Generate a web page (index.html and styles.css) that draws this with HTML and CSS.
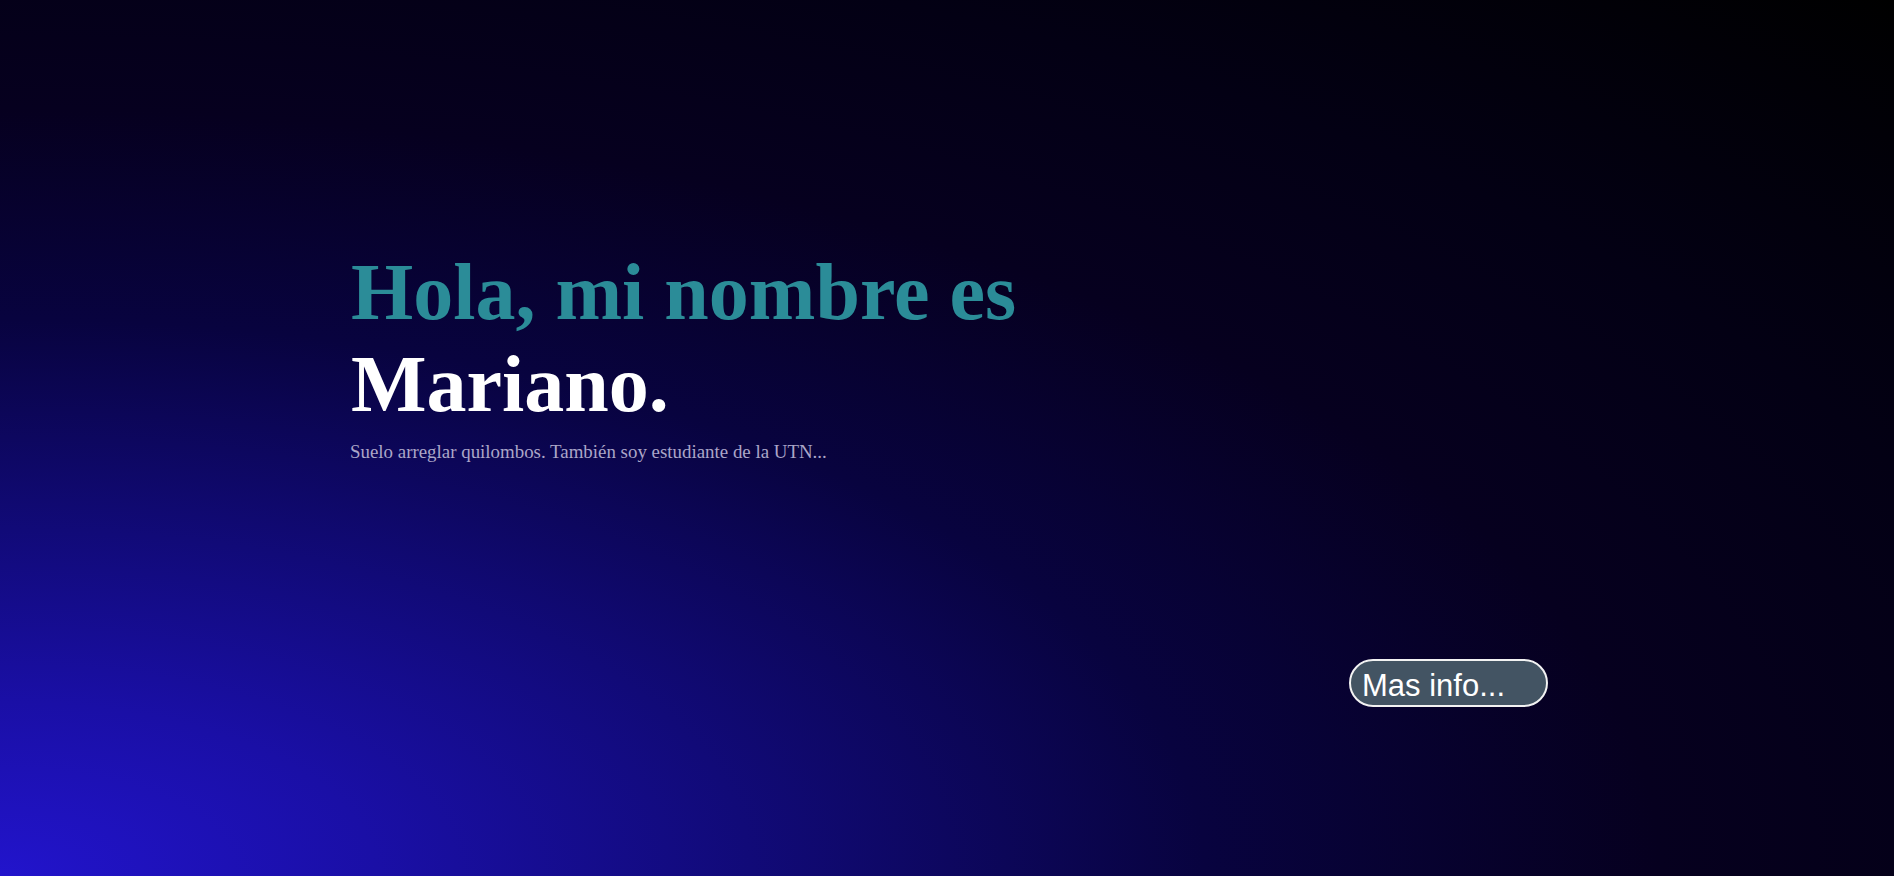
FILE: index.html
```html
<!DOCTYPE html>
<html lang="es">
<head>
<meta charset="utf-8">
<title>Mariano</title>
<link rel="stylesheet" href="styles.css">
</head>
<body>
<main class="hero">
  <section class="intro">
    <h1 class="title"><span class="greet">Hola, mi nombre es</span><span class="name">Mariano.</span></h1>
    <p class="lead">Suelo arreglar quilombos. También soy estudiante de la UTN...</p>
  </section>
  <div class="actions">
    <button class="more" type="button">Mas info...</button>
  </div>
</main>
</body>
</html>
```
FILE: styles.css
```css
html, body {
  margin: 0;
  padding: 0;
  height: 100%;
}
body {
  background: radial-gradient(ellipse farthest-corner at 0% 100%, #2214cc 0%, #1a0fa6 14%, #110a78 28%, #08033f 45%, #06001f 62%, #030014 78%, #000 100%);
  font-family: "Liberation Serif", "Times New Roman", serif;
  overflow: hidden;
}
.hero {
  box-sizing: border-box;
  height: 100vh;
  padding: 246px 346px 0 350px;
  display: flex;
  flex-direction: column;
}
.intro {
  display: flex;
  flex-direction: column;
}
.title {
  margin: 0 0 0 1px;
  font-size: 80px;
  font-weight: bold;
  line-height: 92px;
  display: flex;
  flex-direction: column;
}
.greet {
  color: #2b8c98;
}
.name {
  color: #ffffff;
}
.lead {
  margin: 11px 0 0 0;
  font-size: 18.9px;
  color: #aba6c8;
}
.actions {
  display: flex;
  justify-content: flex-end;
  margin-top: 196px;
}
.more {
  box-sizing: border-box;
  width: 199px;
  height: 48px;
  border: 2px solid #f2f2f2;
  border-radius: 24px;
  background: #435463;
  color: #ffffff;
  font-family: "Liberation Sans", Arial, sans-serif;
  font-size: 31px;
  text-align: left;
  padding: 5px 0 0 11px;
  line-height: 39px;
}
```
